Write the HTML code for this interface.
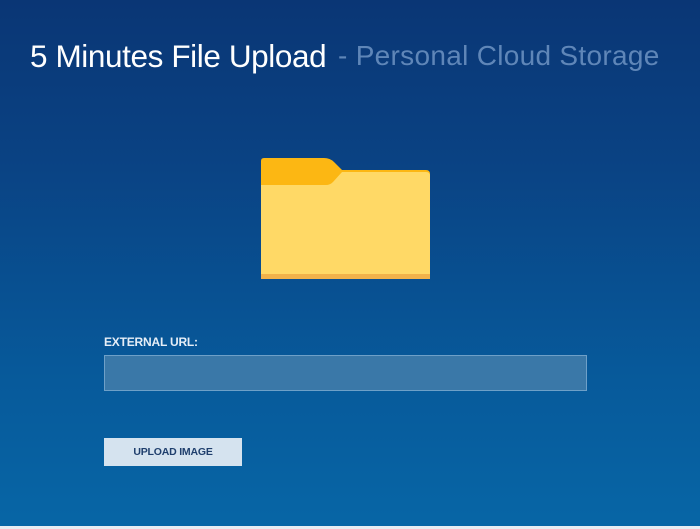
<!DOCTYPE html>
<html><head><meta charset="utf-8"><style>
html,body{margin:0;padding:0;}
body{width:700px;height:529px;overflow:hidden;position:relative;font-family:"Liberation Sans",sans-serif;
background:linear-gradient(180deg,#0a3675 0%,#0a4283 30%,#07599a 70%,#0766a6 100%);}
.title{position:absolute;left:30px;top:38px;white-space:nowrap;font-size:31.5px;color:#fff;letter-spacing:-0.4px;}
.sub{position:absolute;left:338px;top:40px;white-space:nowrap;color:#5f86b8;font-size:28px;letter-spacing:0.3px;}
.label{position:absolute;left:104px;top:335px;color:#e6eef7;font-size:12px;font-weight:bold;letter-spacing:-0.2px;}
.input{position:absolute;left:104px;top:355px;width:481px;height:34px;background:#3a78a8;border:1px solid #6ea0c8;}
.btn{position:absolute;left:104px;top:438px;width:138px;height:28px;background:#d5e3ef;color:#1f3f6d;font-size:10.5px;text-align:center;line-height:28px;font-weight:bold;letter-spacing:-0.2px;}
.foot{position:absolute;left:0;top:526px;width:700px;height:3px;background:#e8edf2;}
</style></head><body>
<div class="title">5 Minutes File Upload</div>
<div class="sub">- Personal Cloud Storage</div>
<svg style="position:absolute;left:258px;top:155px" width="176" height="128" viewBox="0 0 176 128">
<path d="M6 3 H66 Q72 3 76 7 L84 15 H168 Q172 15 172 19 V120 H3 V6 Q3 3 6 3Z" fill="#fcb713"/>
<path d="M3 30 H68 Q72 30 75 27 L84 17 H168 Q172 17 172 21 V121 Q172 124 169 124 H6 Q3 124 3 121Z" fill="#ffd966"/>
<rect x="3" y="119" width="169" height="5" fill="#f1b24a"/>
</svg>
<div class="label">EXTERNAL URL:</div>
<div class="input"></div>
<div class="btn">UPLOAD IMAGE</div>
<div class="foot"></div>
</body></html>
